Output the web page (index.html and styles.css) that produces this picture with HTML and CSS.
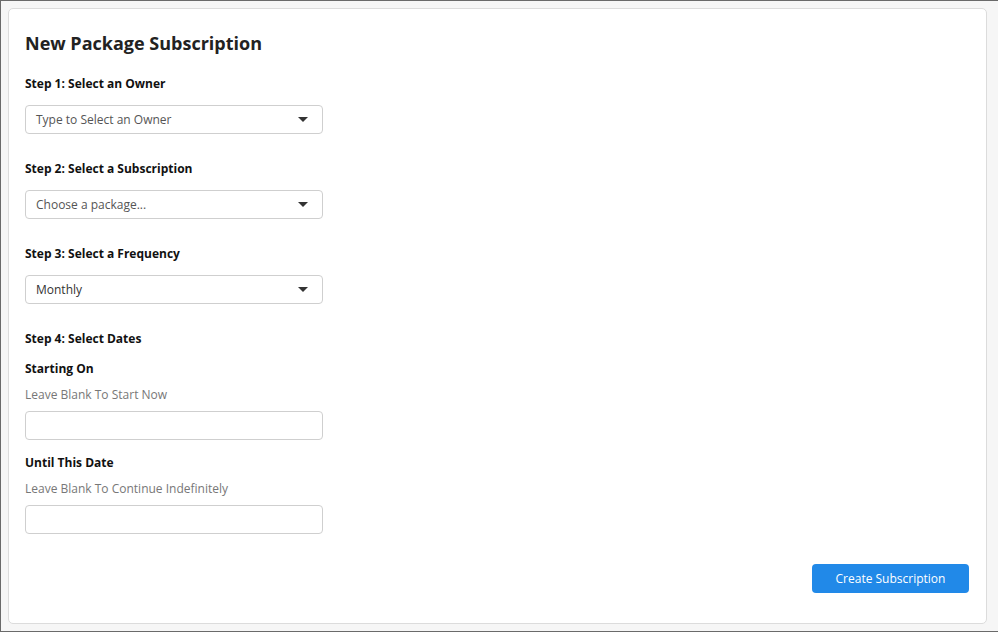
FILE: index.html
```html
<!DOCTYPE html>
<html lang="en">
<head>
<meta charset="utf-8">
<title>New Package Subscription</title>
<link rel="stylesheet" href="styles.css">
</head>
<body>
<div class="card">
  <h1 class="title">New Package Subscription</h1>

  <div class="step">
    <div class="label">Step 1: Select an Owner</div>
    <div class="select"><span class="placeholder">Type to Select an Owner</span><span class="caret"></span></div>
  </div>

  <div class="step">
    <div class="label">Step 2: Select a Subscription</div>
    <div class="select"><span class="placeholder">Choose a package...</span><span class="caret"></span></div>
  </div>

  <div class="step">
    <div class="label">Step 3: Select a Frequency</div>
    <div class="select"><span class="value">Monthly</span><span class="caret"></span></div>
  </div>

  <div class="step dates">
    <div class="label">Step 4: Select Dates</div>
    <div class="label sub">Starting On</div>
    <div class="hint">Leave Blank To Start Now</div>
    <div class="input"></div>
    <div class="label sub2">Until This Date</div>
    <div class="hint">Leave Blank To Continue Indefinitely</div>
    <div class="input"></div>
  </div>

  <div class="actions">
    <button class="btn">Create Subscription</button>
  </div>
</div>
</body>
</html>
```

FILE: styles.css
```css
html, body {
  margin: 0;
  padding: 0;
}
body {
  width: 998px;
  height: 632px;
  box-sizing: border-box;
  background: #f6f6f6;
  border-top: 1px solid #6a6a6a;
  border-left: 1px solid #6a6a6a;
  border-bottom: 1px solid #6a6a6a;
  padding: 7px 11px 0 7px;
  font-family: "Open Sans", "Liberation Sans", sans-serif;
  color: #222;
}
.card {
  background: #fff;
  border: 1px solid #dcdcdc;
  border-radius: 5px;
  height: 616px;
  box-sizing: border-box;
  padding: 20px 17px 0 16px;
}
.title {
  margin: 0;
  font-size: 18px;
  line-height: 28px;
  font-weight: 700;
  color: #222;
}
.step {
  margin-top: 18px;
}
.step + .step {
  margin-top: 26px;
}
.label {
  font-size: 12px;
  line-height: 18px;
  font-weight: 700;
  color: #111;
}
.select, .input {
  width: 298px;
  height: 29px;
  box-sizing: border-box;
  border: 1px solid #cfcfcf;
  border-radius: 4px;
  background: #fff;
}
.select {
  margin-top: 12px;
  display: flex;
  align-items: center;
  justify-content: space-between;
  padding: 0 14px 0 10px;
  font-size: 12px;
}
.placeholder {
  color: #555;
}
.value {
  color: #333;
}
.caret {
  width: 0;
  height: 0;
  border-left: 5px solid transparent;
  border-right: 5px solid transparent;
  border-top: 5px solid #333;
}
.sub {
  margin-top: 12px;
}
.sub2 {
  margin-top: 14px;
}
.hint {
  margin-top: 8px;
  font-size: 12px;
  line-height: 18px;
  color: #777;
}
.input {
  margin-top: 7px;
}
.actions {
  display: flex;
  justify-content: flex-end;
  margin-top: 30px;
}
.btn {
  width: 157px;
  height: 29px;
  border: none;
  border-radius: 4px;
  background: #2189e8;
  color: #fff;
  font-family: "Open Sans", "Liberation Sans", sans-serif;
  font-size: 12px;
  padding: 0;
  cursor: pointer;
}
```
